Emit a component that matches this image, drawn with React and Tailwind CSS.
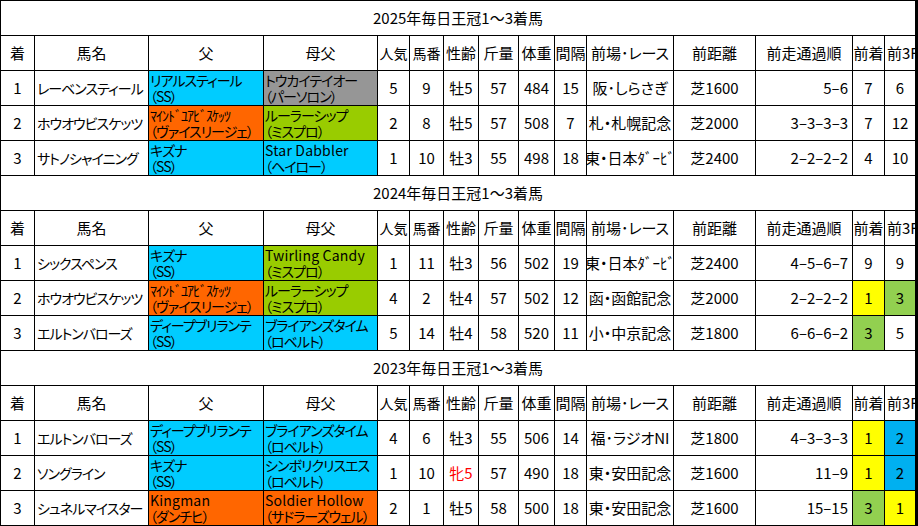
import clsx from 'clsx';

const GRID = 'grid grid-cols-[33px_113px_114px_113px_31px_33px_34px_39px_35px_31px_86px_81px_96px_31px_30px] auto-rows-[34px] gap-px';

const HEAD = ['着', '馬名', '父', '母父', '人気', '馬番', '性齢', '斤量', '体重', '間隔', '前場･レース', '前距離', '前走通過順', '前着', '前3F'];

// Kana in the sheet is proportional and narrow, so squeeze it a little.
const KANA = 'text-[14px] tracking-[-1px]';

const BG = {
  cyan: 'bg-[#00ccff]',
  gray: 'bg-[#969696]',
  orange: 'bg-[#ff6600]',
  lime: 'bg-[#99cc00]',
  yellow: 'bg-[#ffff00]',
  green: 'bg-[#92d050]',
  blue: 'bg-[#00b0f0]',
};

const SECTIONS = [
  {
    title: '2025年毎日王冠1～3着馬',
    rows: [
      ['1', 'レーベンスティール', ['リアルスティール', '（SS）', 'cyan'], ['トウカイテイオー', '（パーソロン）', 'gray'], '5', '9', '牡5', '57', '484', '15', '阪･しらさぎ', '芝1600', '5–6', ['7'], ['6']],
      ['2', 'ホウオウビスケッツ', ['ﾏｲﾝﾄﾞﾕｱﾋﾞｽｹｯﾂ', '（ヴァイスリージェ）', 'orange'], ['ルーラーシップ', '（ミスプロ）', 'lime'], '2', '8', '牡5', '57', '508', '7', '札・札幌記念', '芝2000', '3–3–3–3', ['7'], ['12']],
      ['3', 'サトノシャイニング', ['キズナ', '（SS）', 'cyan'], ['Star Dabbler', '（ヘイロー）', 'cyan'], '1', '10', '牡3', '55', '498', '18', '東・日本ﾀﾞｰﾋﾞ', '芝2400', '2–2–2–2', ['4'], ['10']],
    ],
  },
  {
    title: '2024年毎日王冠1～3着馬',
    rows: [
      ['1', 'シックスペンス', ['キズナ', '（SS）', 'cyan'], ['Twirling Candy', '（ミスプロ）', 'lime'], '1', '11', '牡3', '56', '502', '19', '東・日本ﾀﾞｰﾋﾞ', '芝2400', '4–5–6–7', ['9'], ['9']],
      ['2', 'ホウオウビスケッツ', ['ﾏｲﾝﾄﾞﾕｱﾋﾞｽｹｯﾂ', '（ヴァイスリージェ）', 'orange'], ['ルーラーシップ', '（ミスプロ）', 'lime'], '4', '2', '牡4', '57', '502', '12', '函・函館記念', '芝2000', '2–2–2–2', ['1', 'yellow'], ['3', 'green']],
      ['3', 'エルトンバローズ', ['ディープブリランテ', '（SS）', 'cyan'], ['ブライアンズタイム', '（ロベルト）', 'cyan'], '5', '14', '牡4', '58', '520', '11', '小・中京記念', '芝1800', '6–6–6–2', ['3', 'green'], ['5']],
    ],
  },
  {
    title: '2023年毎日王冠1～3着馬',
    rows: [
      ['1', 'エルトンバローズ', ['ディープブリランテ', '（SS）', 'cyan'], ['ブライアンズタイム', '（ロベルト）', 'cyan'], '4', '6', '牡3', '55', '506', '14', '福･ラジオNI', '芝1800', '4–3–3–3', ['1', 'yellow'], ['2', 'blue']],
      ['2', 'ソングライン', ['キズナ', '（SS）', 'cyan'], ['シンボリクリスエス', '（ロベルト）', 'cyan'], '1', '10', '牝5', '57', '490', '18', '東・安田記念', '芝1600', '11–9', ['1', 'yellow'], ['2', 'blue']],
      ['3', 'シュネルマイスター', ['Kingman', '（ダンチヒ）', 'orange'], ['Soldier Hollow', '（サドラーズウェル）', 'orange'], '2', '1', '牡5', '58', '500', '18', '東・安田記念', '芝1600', '15–15', ['3', 'green'], ['1', 'yellow']],
    ],
  },
];

function Cell({ className, bg = 'bg-white', children }) {
  return (
    <div className={clsx('flex items-center overflow-hidden whitespace-nowrap', bg, className)}>
      {children}
    </div>
  );
}

function Pedigree({ data }) {
  const [name, line, color] = data;
  const latin = /^[A-Za-z]/.test(name);
  return (
    <div className={clsx('flex flex-col justify-center overflow-hidden whitespace-nowrap pl-px leading-[16px]', KANA, BG[color])}>
      <span className={clsx(latin && 'tracking-[0.2px]')}>{name}</span>
      <span>{line}</span>
    </div>
  );
}

function DataRow({ row }) {
  const [rank, horse, sire, dam, pop, num, sexAge, weight, body, gap, prev, dist, pass, prevRank, last3f] = row;
  return (
    <>
      <Cell className="justify-center">{rank}</Cell>
      <Cell className={clsx('pl-[2px]', KANA)}>{horse}</Cell>
      <Pedigree data={sire} />
      <Pedigree data={dam} />
      <Cell className="justify-center">{pop}</Cell>
      <Cell className="justify-center">{num}</Cell>
      <Cell className={clsx('justify-center', sexAge.startsWith('牝') && 'text-[#ff0000]')}>{sexAge}</Cell>
      <Cell className="justify-center">{weight}</Cell>
      <Cell className="justify-center">{body}</Cell>
      <Cell className="justify-center">{gap}</Cell>
      <Cell className="justify-center">{prev}</Cell>
      <Cell className="justify-center">{dist}</Cell>
      <Cell className="justify-end pr-[4px]">{pass}</Cell>
      <Cell className="justify-center" bg={BG[prevRank[1]] || 'bg-white'}>{prevRank[0]}</Cell>
      <Cell className="justify-center" bg={BG[last3f[1]] || 'bg-white'}>{last3f[0]}</Cell>
    </>
  );
}

export default function App() {
  return (
    <div className="w-[918px] bg-white font-['Noto_Sans_CJK_JP',sans-serif] text-[15px] text-black [font-feature-settings:'palt']">
      <div className={clsx(GRID, 'bg-black p-px pr-[3px]')}>
        {SECTIONS.map((sec) => (
          <div key={sec.title} className="contents">
            <Cell className="col-span-full justify-center">{sec.title}</Cell>
            {HEAD.map((h, i) => (
              <Cell
                key={h}
                className={clsx(
                  i === 14 ? 'pl-[2px]' : 'justify-center',
                  (i === 4 || i === 5) && 'text-[14px]'
                )}
              >
                {h}
              </Cell>
            ))}
            {sec.rows.map((r) => (
              <DataRow key={r[0] + r[1]} row={r} />
            ))}
          </div>
        ))}
      </div>
    </div>
  );
}
